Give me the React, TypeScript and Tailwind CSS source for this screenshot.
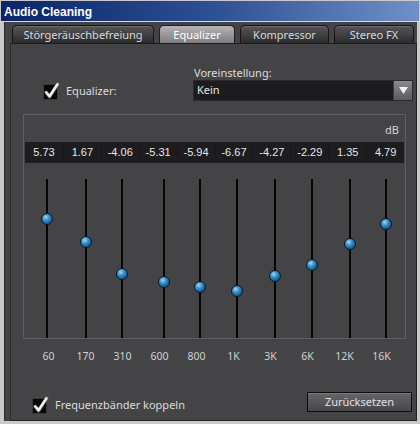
import React from 'react';

const bands = [
  { f: '60', v: '5.73', ml: 'ml-[22px]', top: 'top-[34px]' },
  { f: '170', v: '1.67', ml: 'ml-[37px]', top: 'top-[57px]' },
  { f: '310', v: '-4.06', ml: 'ml-[34px]', top: 'top-[89px]' },
  { f: '600', v: '-5.31', ml: 'ml-[40px]', top: 'top-[97px]' },
  { f: '800', v: '-5.94', ml: 'ml-[34px]', top: 'top-[102px]' },
  { f: '1K', v: '-6.67', ml: 'ml-[35px]', top: 'top-[106px]' },
  { f: '3K', v: '-4.27', ml: 'ml-[36px]', top: 'top-[91px]' },
  { f: '6K', v: '-2.29', ml: 'ml-[35px]', top: 'top-[80px]' },
  { f: '12K', v: '1.35', ml: 'ml-[36px]', top: 'top-[59px]' },
  { f: '16K', v: '4.79', ml: 'ml-[34px]', top: 'top-[39px]' },
];

function Check() {
  return (
    <svg width="17" height="18" viewBox="0 0 17 18" className="block">
      <rect x="0.5" y="2.5" width="14" height="15" fill="#050505" stroke="#3a3a3a" />
      <path d="M3.2 10.5 L6.6 14.6 L14.6 2.2" stroke="#8a8a8a" strokeWidth="3.4" fill="none" strokeLinecap="round" strokeLinejoin="round" />
      <path d="M3.2 10.3 L6.6 14.2 L14.4 2.4" stroke="#f4f4f4" strokeWidth="2.2" fill="none" strokeLinecap="round" strokeLinejoin="round" />
    </svg>
  );
}

const ui = { fontFamily: '"Noto Sans", "Open Sans", sans-serif' };
const arial = { fontFamily: '"Liberation Sans", Arial, sans-serif' };

export default function App() {
  const tabs = [
    { t: 'Störgeräuschbefreiung', w: 'w-[142px]', active: false },
    { t: 'Equalizer', w: 'w-[76px]', active: true },
    { t: 'Kompressor', w: 'w-[89px]', active: false },
    { t: 'Stereo FX', w: 'w-[80px]', active: false },
  ];
  return (
    <div className="w-[420px] h-[424px] bg-[#c9c9c9] flex flex-col overflow-hidden" style={ui}>
      <div className="h-[20px] mt-[1px] mx-[1px] bg-gradient-to-r from-[#0a246a] via-[#2d4f93] to-[#6f90c8] flex items-end pb-[2px] pl-[3px]">
        <span className="text-white font-bold text-[12px] leading-[14px]" style={arial}>
          Audio Cleaning
        </span>
      </div>
      <div className="h-[1px] bg-[#d8d8d8]" />
      <div className="flex-1 ml-[4px] mr-[3px] mb-[3px] bg-[#434346] border-l border-[#2a2a2c] flex flex-col">
        {/* tabs */}
        <div className="flex items-end gap-[5px] pl-[7px] pt-[3px] h-[21px]">
          {tabs.map((tab) => (
            <div
              key={tab.t}
              className={
                tab.active
                  ? `${tab.w} h-[18px] rounded-t-[5px] border border-b-0 border-[#202022] bg-gradient-to-b from-[#b4b4b8] to-[#7e7e82] flex items-center justify-center text-[11px] text-white pt-[1px]`
                  : `${tab.w} h-[18px] rounded-t-[5px] border border-b-0 border-[#151516] bg-gradient-to-b from-[#56565a] to-[#2c2c2e] shadow-[inset_0_1px_0_#6a6a6e] flex items-center justify-center text-[11px] text-[#d8d8d8] pt-[1px]`
              }
            >
              {tab.t}
            </div>
          ))}
        </div>
        {/* panel */}
        <div className="flex-1 ml-[5px] border-t border-t-[#1c1c1e] border-l border-l-[#2c2c2e] border-r border-r-[#232325] border-b border-b-[#232325] bg-[#444447] flex flex-col">
          {/* top row */}
          <div className="flex pt-[20px] h-[70px]">
            <div className="w-[182px] pl-[32px] pt-[16px]">
              <div className="h-[22px] flex items-center gap-[6px]">
                <Check />
                <span className="text-[11px] text-[#dcdcdc]">Equalizer:</span>
              </div>
            </div>
            <div className="flex flex-col w-[220px]">
              <div className="h-[16px] flex items-center text-[11px] text-[#dcdcdc] leading-none pl-[1px]">Voreinstellung:</div>
              <div className="h-[21px] bg-[#1c1c1e] border border-[#2a2a2c] flex items-center">
                <span className="flex-1 pl-[3px] text-[11px] text-[#e4e4e4]">Kein</span>
                <div className="w-[19px] h-[19px] bg-gradient-to-b from-[#8a8a8e] to-[#5c5c60] border-l border-[#3a3a3c] flex items-center justify-center">
                  <svg width="9" height="7" viewBox="0 0 9 7">
                    <path d="M0 0 H9 L4.5 7 Z" fill="#f2f2f2" />
                  </svg>
                </div>
              </div>
            </div>
          </div>
          {/* EQ box */}
          <div className="ml-[12px] w-[383px] h-[225px] border border-[#5e5e62] flex flex-col">
            <div className="h-[27px] pt-[3px] pr-[6px] flex items-center justify-end text-[11px] text-[#d4d4d4]">dB</div>
            <div className="h-[21px] mx-[1px] bg-[#1d1d1f] flex" style={arial}>
              {bands.map((b, i) => (
                <div
                  key={b.f}
                  className={
                    i === 0
                      ? 'w-[38px] flex items-center justify-center text-[11px] text-[#e6e6e6]'
                      : 'w-[38px] flex items-center justify-center text-[11px] text-[#e6e6e6] border-l border-[#18181a]'
                  }
                >
                  {b.v}
                </div>
              ))}
            </div>
            <div className="h-[16px]" />
            <div className="flex-1 flex">
              {bands.map((b) => (
                <div key={b.f} className={`${b.ml} w-[2px] h-full bg-[#050505] relative`}>
                  <div
                    className={`absolute ${b.top} left-1/2 -translate-x-1/2 w-[12px] h-[12px] rounded-full border border-[#071a2b] bg-[radial-gradient(circle_at_38%_32%,#9fd8f8_0%,#3a92c8_35%,#155f94_70%,#0b3d63_100%)]`}
                  />
                </div>
              ))}
            </div>
          </div>
          {/* freq labels */}
          <div className="flex ml-[19px] h-[34px] items-center pt-[1px]">
            {bands.map((b) => (
              <div key={b.f} className="w-[37px] text-center text-[10.5px] text-[#d0d0d0]">
                {b.f}
              </div>
            ))}
          </div>
          {/* bottom row */}
          <div className="flex items-start mt-[19px] pl-[21px] pr-[4px]">
            <div className="flex items-center gap-[6px] mt-[4px]">
              <Check />
              <span className="text-[11px] text-[#dcdcdc]">Frequenzbänder koppeln</span>
            </div>
            <div className="flex-1" />
            <div className="w-[105px] h-[20px] border border-[#0c0c0c] bg-gradient-to-b from-[#67676b] to-[#47474b] shadow-[inset_0_1px_0_#7a7a7e] flex items-center justify-center text-[11px] text-[#e0e0e0]">
              Zurücksetzen
            </div>
          </div>
        </div>
      </div>
    </div>
  );
}
